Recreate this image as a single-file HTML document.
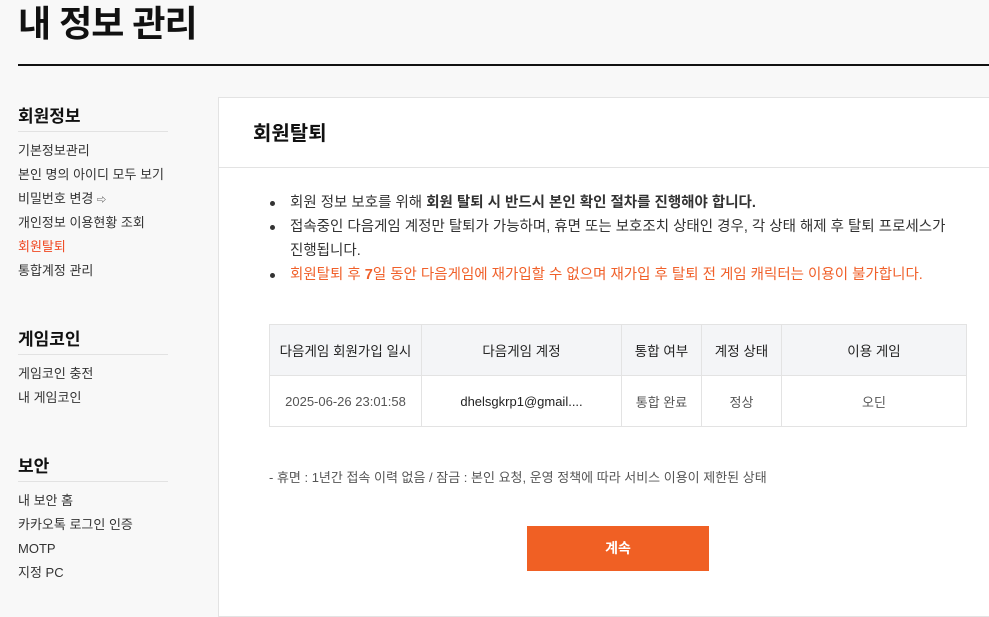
<!DOCTYPE html>
<html><head><meta charset="utf-8"><style>
*{margin:0;padding:0;box-sizing:border-box}
body{width:989px;height:591px;overflow:hidden;background:#f8f8f8;font-family:"Liberation Sans","Noto Sans CJK KR",sans-serif;color:#222;position:relative}
.abs{position:absolute}
h1{position:absolute;left:18px;top:2px;font-size:36px;font-weight:bold;color:#111;line-height:44px;letter-spacing:-1px}
.rule{left:18px;top:64px;width:971px;height:2px;background:#111}
.side h2{font-size:17px;font-weight:bold;color:#111;position:absolute;left:18px}
.side .ln{position:absolute;left:18px;width:150px;height:1px;background:#e2e2e2}
.side a{position:absolute;left:18px;font-size:13px;color:#333;white-space:nowrap;line-height:16px}
.box{left:218px;top:97px;width:780px;height:520px;background:#fff;border:1px solid #e3e3e3}
ul{position:absolute;left:270px;top:191px;width:680px;font-size:14.5px;line-height:24px;color:#333;list-style:none}
ul li{position:relative;padding-left:20px}
ul li:before{content:"";position:absolute;left:0;top:10px;width:5px;height:5px;border-radius:50%;background:#333}
table{position:absolute;left:269px;top:324px;border-collapse:collapse;font-size:13px}
td,th{border:1px solid #e3e3e3;text-align:center;height:51px;padding:0}
th{background:#f4f5f7;font-weight:normal;color:#222;font-size:13.5px}
td{color:#555}
</style></head><body>
<h1>내 정보 관리</h1>
<div class="abs rule"></div>
<div class="side">
<h2 style="top:102px">회원정보</h2><div class="ln" style="top:131px"></div>
<a style="top:143px">기본정보관리</a>
<a style="top:167px">본인 명의 아이디 모두 보기</a>
<a style="top:191px">비밀번호 변경 <span style="font-size:9px">⇨</span></a>
<a style="top:215px">개인정보 이용현황 조회</a>
<a style="top:239px;color:#f04a24">회원탈퇴</a>
<a style="top:263px">통합계정 관리</a>
<h2 style="top:325px">게임코인</h2><div class="ln" style="top:354px"></div>
<a style="top:366px">게임코인 충전</a>
<a style="top:390px">내 게임코인</a>
<h2 style="top:452px">보안</h2><div class="ln" style="top:481px"></div>
<a style="top:493px">내 보안 홈</a>
<a style="top:517px">카카오톡 로그인 인증</a>
<a style="top:541px">MOTP</a>
<a style="top:565px">지정 PC</a>
</div>
<div class="abs box"></div>
<div class="abs" style="left:219px;top:167px;width:770px;height:1px;background:#e3e3e3"></div>
<div class="abs" style="left:253px;top:117px;font-size:20px;font-weight:bold;color:#111">회원탈퇴</div>
<ul>
<li>회원 정보 보호를 위해 <b>회원 탈퇴 시 반드시 본인 확인 절차를 진행해야 합니다.</b></li>
<li>접속중인 다음게임 계정만 탈퇴가 가능하며, 휴면 또는 보호조치 상태인 경우, 각 상태 해제 후 탈퇴 프로세스가<br>진행됩니다.</li>
<li style="color:#f0602a">회원탈퇴 후 <b>7</b>일 동안 다음게임에 재가입할 수 없으며 재가입 후 탈퇴 전 게임 캐릭터는 이용이 불가합니다.</li>
</ul>
<table>
<tr><th style="width:152px">다음게임 회원가입 일시</th><th style="width:200px">다음게임 계정</th><th style="width:80px">통합 여부</th><th style="width:80px">계정 상태</th><th style="width:185px">이용 게임</th></tr>
<tr><td>2025-06-26 23:01:58</td><td style="color:#222">dhelsgkrp1@gmail....</td><td>통합 완료</td><td>정상</td><td>오딘</td></tr>
</table>
<div class="abs" style="left:269px;top:467px;font-size:13px;color:#555">- 휴면 : 1년간 접속 이력 없음 / 잠금 : 본인 요청, 운영 정책에 따라 서비스 이용이 제한된 상태</div>
<div class="abs" style="left:527px;top:526px;width:182px;height:45px;background:#f06024;color:#fff;font-size:14px;font-weight:bold;text-align:center;line-height:45px">계속</div>
</body></html>
